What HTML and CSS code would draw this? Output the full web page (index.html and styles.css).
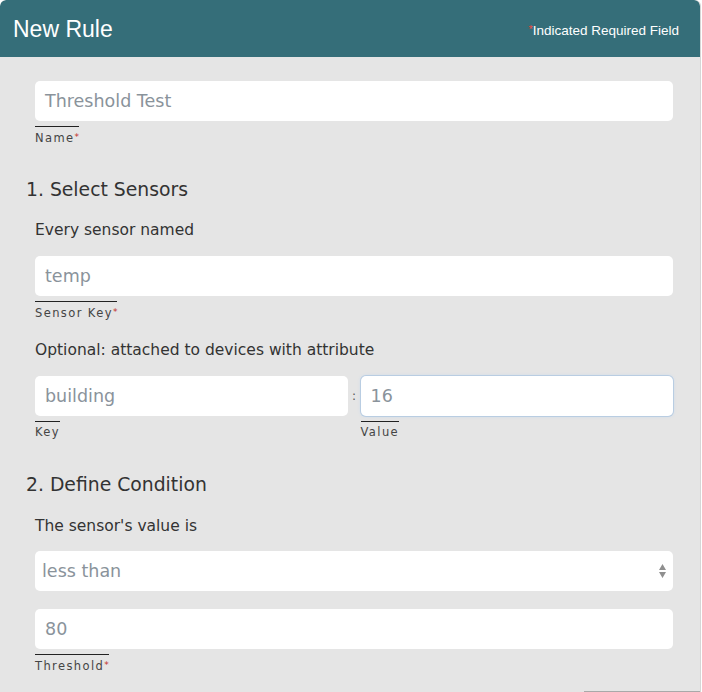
FILE: index.html
```html
<!DOCTYPE html>
<html>
<head>
<meta charset="utf-8">
<link rel="stylesheet" href="styles.css">
</head>
<body>
<div class="panel">
  <div class="header">
    <h1 class="title">New Rule</h1>
    <div class="req-note"><span class="star">*</span>Indicated Required Field</div>
  </div>
  <div class="body">
    <div class="field">
      <div class="input"><span class="ph">Threshold Test</span></div>
      <div class="label">Name<span class="star">*</span></div>
    </div>

    <h2 class="section">1. Select Sensors</h2>
    <p class="text">Every sensor named</p>
    <div class="field">
      <div class="input"><span class="ph">temp</span></div>
      <div class="label">Sensor Key<span class="star">*</span></div>
    </div>
    <p class="text">Optional: attached to devices with attribute</p>
    <div class="pair">
      <div class="field">
        <div class="input"><span class="ph">building</span></div>
        <div class="label">Key</div>
      </div>
      <div class="colon">:</div>
      <div class="field">
        <div class="input focus"><span class="ph">16</span></div>
        <div class="label">Value</div>
      </div>
    </div>

    <h2 class="section">2. Define Condition</h2>
    <p class="text">The sensor's value is</p>
    <div class="field">
      <div class="input select"><span class="ph sel">less than</span>
        <svg class="arrows" width="9" height="16" viewBox="0 0 9 16"><path d="M4.5 1 L8 7 L1 7 Z M1 9 L8 9 L4.5 15 Z" fill="#8f8f8f"/></svg>
      </div>
    </div>
    <div class="field">
      <div class="input"><span class="ph">80</span></div>
      <div class="label">Threshold<span class="star">*</span></div>
    </div>
  </div>
  <div class="footer"><div class="btn"></div></div>
</div>
</body>
</html>
```
FILE: styles.css
```css
html, body {
  margin: 0;
  padding: 0;
  background: #ffffff;
}
.panel {
  width: 700px;
  height: 692px;
  background: #e5e5e5;
  border-right: 1px solid #d6d6d6;
  font-family: "DejaVu Sans", sans-serif;
  color: #333;
  overflow: hidden;
  display: flex;
  flex-direction: column;
  border-radius: 6px 6px 0 0;
}
.header {
  height: 57px;
  background: #356e79;
  display: flex;
  align-items: center;
  justify-content: space-between;
  padding: 0 21px 0 13px;
  border-radius: 6px 6px 0 0;
  flex: none;
}
.title {
  margin: 0;
  font-family: "Liberation Sans", Arial, sans-serif;
  font-weight: normal;
  font-size: 23px;
  color: #fff;
  padding-top: 2px;
}
.req-note {
  font-family: "Liberation Sans", Arial, sans-serif;
  font-size: 13.5px;
  color: #fff;
  padding-top: 4px;
}
.req-note .star {
  color: #ef4a3f;
  font-size: 11px;
  vertical-align: 2px;
}
.body {
  padding: 24px 27px 0 35px;
  flex: 1;
}
.field {
  display: flex;
  flex-direction: column;
  align-items: flex-start;
}
.input {
  align-self: stretch;
  height: 40px;
  background: #fff;
  border-radius: 5px;
  display: flex;
  align-items: center;
  padding: 0 10px;
  box-sizing: border-box;
  position: relative;
}
.input.focus {
  box-shadow: 0 0 0 1px #b9cde2, 0 0 3px 1px #d0dcea;
}
.ph {
  color: #8a939b;
  font-size: 17.5px;
  font-weight: normal;
}
.ph.sel {
  margin-left: -3px;
}
.arrows {
  position: absolute;
  right: 6px;
  top: 12px;
}
.label {
  margin-top: 5px;
  border-top: 1px solid #222;
  padding-top: 3px;
  font-size: 11.5px;
  letter-spacing: 1.4px;
  color: #444;
  line-height: 14px;
}
.label .star {
  color: #c3302a;
  font-size: 9px;
  vertical-align: 2px;
  letter-spacing: 0;
}
.section {
  margin: 33px 0 0 -9px;
  font-size: 18.8px;
  font-weight: normal;
  color: #333;
  line-height: 24px;
}
.text {
  margin: 19px 0 15.5px;
  font-size: 15.5px;
  line-height: 19px;
  color: #333;
}
.field + .text {
  margin-top: 21.5px;
}
.pair {
  display: flex;
  align-items: flex-start;
}
.pair .field {
  flex: 1;
}
.colon {
  width: 13px;
  text-align: center;
  height: 40px;
  line-height: 40px;
  font-size: 12px;
  color: #555;
}
.pair + .section {
  margin-top: 34px;
}
.pair + .section + .text {
  margin-top: 20px;
}
.field + .field {
  margin-top: 18px;
}
.footer {
  height: 1px;
  display: flex;
  justify-content: flex-end;
  flex: none;
}
.btn {
  width: 116px;
  height: 1px;
  background: #a9a9a9;
}
```
